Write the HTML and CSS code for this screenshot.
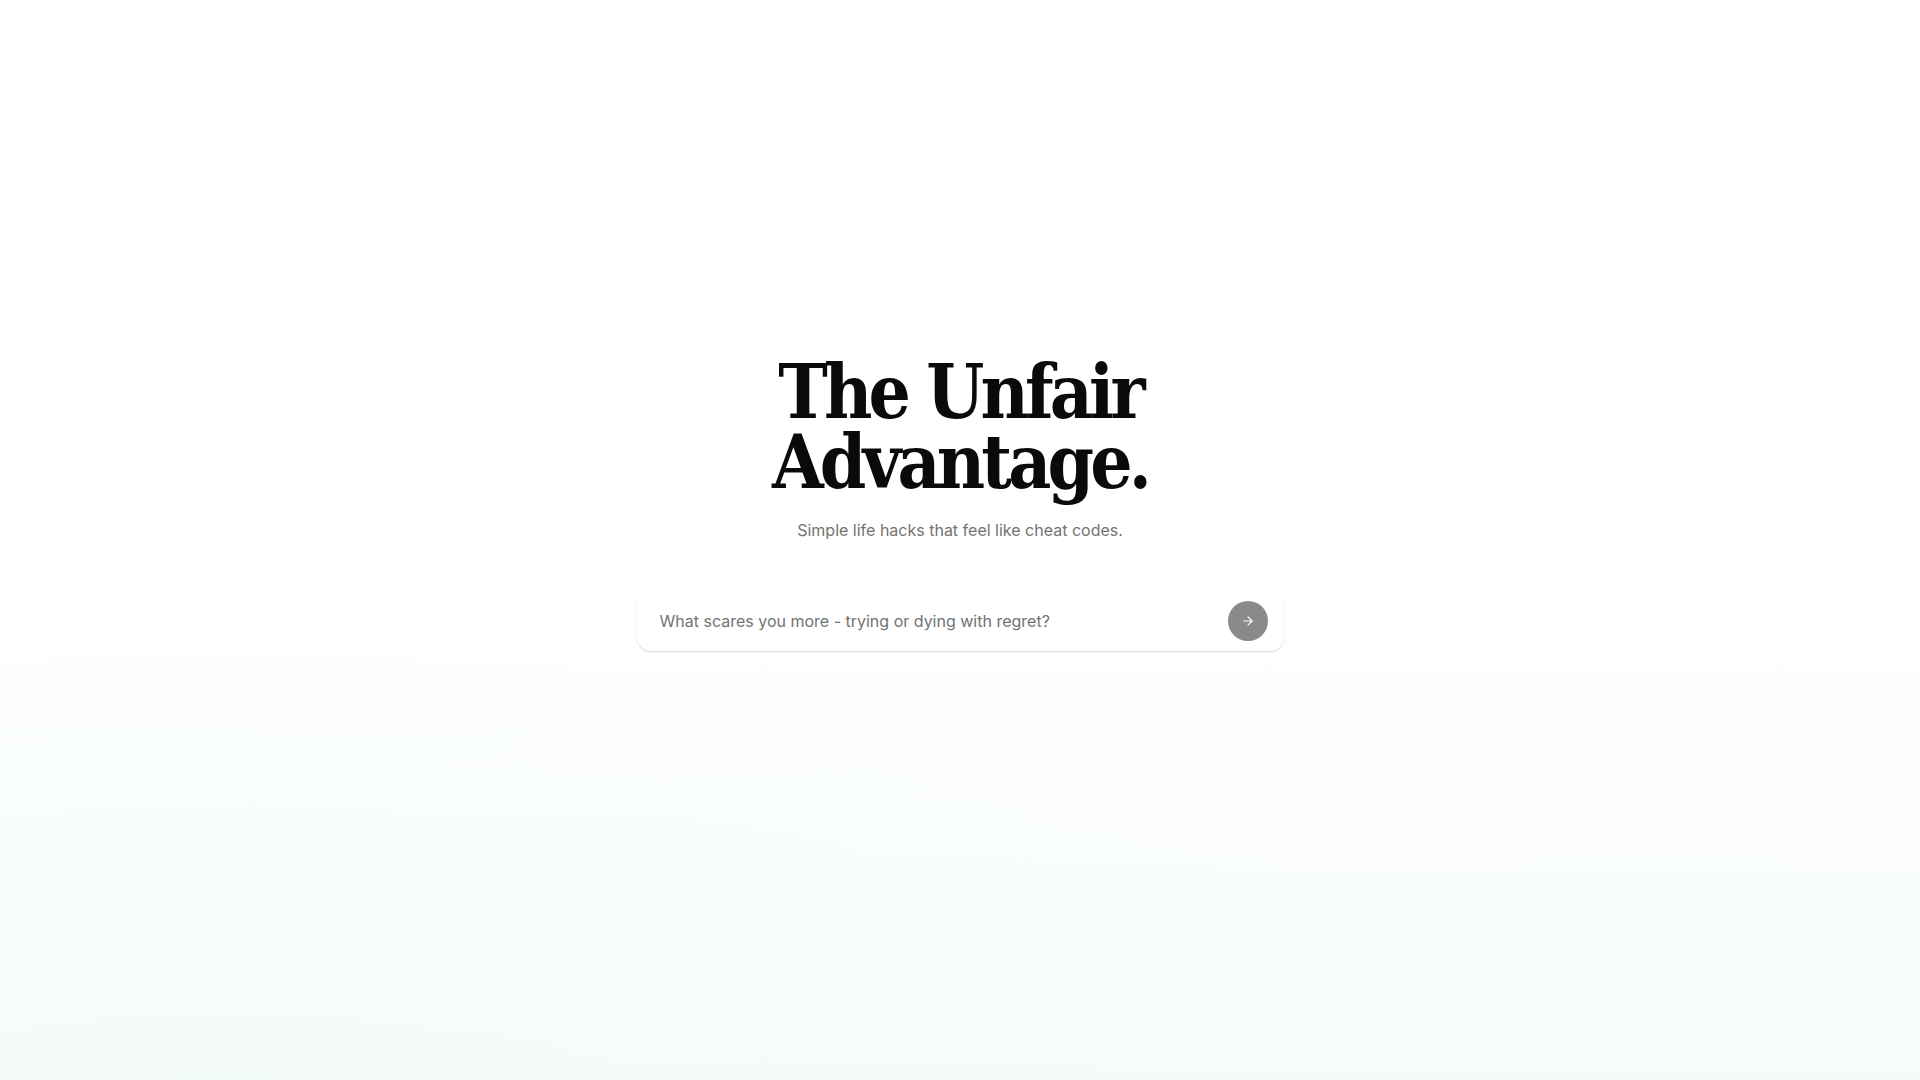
FILE: index.html
```html
<!DOCTYPE html>
<html lang="en">
<head>
<meta charset="utf-8">
<title>The Unfair Advantage</title>
<link rel="stylesheet" href="styles.css">
</head>
<body>
<main class="hero">
  <h1 class="title"><span class="title-line">The Unfair</span><span class="title-line">Advantage.</span></h1>
  <p class="subtitle">Simple life hacks that feel like cheat codes.</p>
  <form class="ask" onsubmit="return false">
    <input class="ask-input" type="text" placeholder="What scares you more - trying or dying with regret?">
    <button class="ask-btn" type="submit" aria-label="Submit">
      <svg width="14" height="14" viewBox="0 0 24 24" fill="none" stroke="currentColor" stroke-width="2" stroke-linecap="round" stroke-linejoin="round"><path d="M5 12h14"/><path d="m12 5 7 7-7 7"/></svg>
    </button>
  </form>
</main>
</body>
</html>
```
FILE: styles.css
```css
* { box-sizing: border-box; }
html, body { margin: 0; height: 100%; }
body {
  font-family: Inter, "Noto Sans", sans-serif;
  background:
    radial-gradient(ellipse 60% 40% at 12% 100%, rgba(240, 251, 248, 0.5) 0%, rgba(240, 251, 248, 0) 100%),
    linear-gradient(to bottom, #ffffff 0%, #ffffff 52%, #f6fbfa 100%);
  min-height: 100vh;
}
.hero {
  display: flex;
  flex-direction: column;
  align-items: center;
  padding-top: 357px;
}
.title {
  margin: 0;
  font-family: "DejaVu Serif", serif;
  font-stretch: condensed;
  font-weight: 700;
  font-size: 74px;
  line-height: 70px;
  letter-spacing: -0.052em;
  color: #0a0a0a;
  text-align: center;
  display: flex;
  flex-direction: column;
  align-items: center;
}
.title-line { display: block; }
.subtitle {
  margin: 21px 0 0;
  font-size: 16px;
  line-height: 24px;
  color: #737373;
}
.ask {
  margin-top: 49px;
  width: 647px;
  height: 60px;
  display: flex;
  align-items: center;
  padding: 0 16px 0 23px;
  background: #ffffff;
  border-radius: 14px;
  box-shadow: 0 1px 2px rgba(0,0,0,0.12), 0 1px 1px rgba(0,0,0,0.04);
}
.ask-input {
  flex: 1;
  border: 0;
  outline: 0;
  background: transparent;
  font-family: Inter, "Noto Sans", sans-serif;
  font-size: 16px;
  color: #171717;
  padding: 0;
}
.ask-input::placeholder { color: #737373; }
.ask-btn {
  width: 40px;
  height: 40px;
  border: 0;
  border-radius: 50%;
  background: #8a8a8a;
  color: #ffffff;
  display: flex;
  align-items: center;
  justify-content: center;
  padding: 0;
  cursor: pointer;
}
```
